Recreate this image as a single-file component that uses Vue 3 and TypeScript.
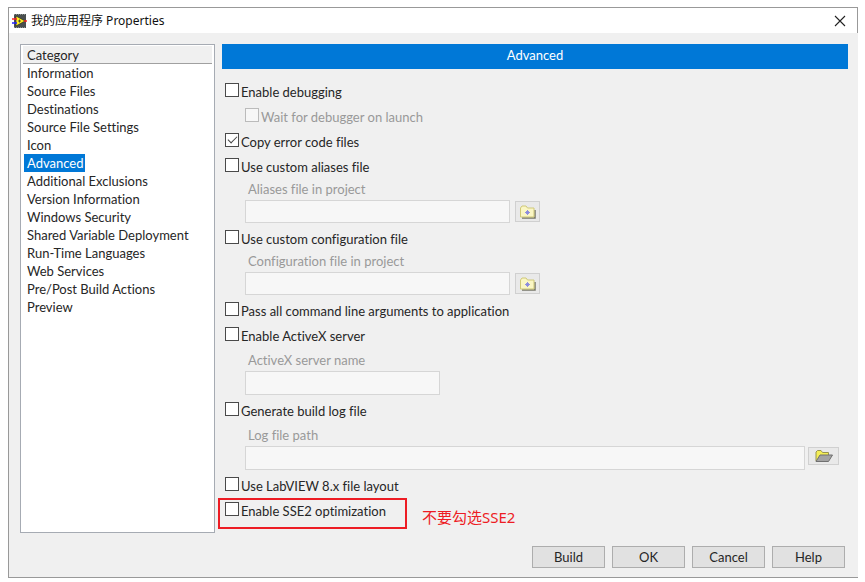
<script setup lang="ts">
import { ref, reactive } from 'vue'

const categories: string[] = [
  'Information',
  'Source Files',
  'Destinations',
  'Source File Settings',
  'Icon',
  'Advanced',
  'Additional Exclusions',
  'Version Information',
  'Windows Security',
  'Shared Variable Deployment',
  'Run-Time Languages',
  'Web Services',
  'Pre/Post Build Actions',
  'Preview',
]
const selected = ref('Advanced')
const actions: string[] = ['Build', 'OK', 'Cancel', 'Help']

const options = reactive({
  debugging: false,
  waitForDebugger: false,
  copyErrorFiles: true,
  customAliases: false,
  customConfig: false,
  passArguments: false,
  activeX: false,
  buildLog: false,
  legacyLayout: false,
  sse2: false,
})
</script>

<template>
  <div class="window">
    <header class="titlebar">
      <svg class="app-icon" viewBox="0 0 15 14" aria-hidden="true">
        <rect x="2" y="0" width="12" height="14" fill="#4a4f50" />
        <path d="M2 .5h12M2 13.500h12" stroke="#8d9490" stroke-dasharray="1 1" />
        <path d="M4 2L13 7L4 12Z" fill="#ffee22" stroke="#222" stroke-width=".6" />
        <path d="M0 5h5" stroke="#f22" stroke-width="1.500" />
        <path d="M0 9h5" stroke="#22f" stroke-width="1.500" />
        <path d="M12 7h3" stroke="#f22" stroke-width="1.500" />
        <path d="M6 7h3M7.500 5.500v3" stroke="#333" stroke-width=".8" />
      </svg>
      <span class="title">我的应用程序 Properties</span>
      <button class="close" type="button" aria-label="Close">
        <svg viewBox="0 0 10 10" aria-hidden="true">
          <path d="M0 0L10 10M10 0L0 10" stroke="#222" stroke-width="1.100" fill="none" />
        </svg>
      </button>
    </header>

    <div class="body">
      <nav class="categories">
        <h2 class="categories-head">Category</h2>
        <ul>
          <li v-for="name in categories" :key="name">
            <button
              type="button"
              :class="['category', { selected: name === selected }]"
              @click="selected = name"
            >{{ name }}</button>
          </li>
        </ul>
      </nav>

      <main class="page">
        <h1 class="banner">{{ selected }}</h1>
        <form class="options" @submit.prevent>
          <label class="check"><input v-model="options.debugging" type="checkbox" /><span>Enable debugging</span></label>
          <label class="check nested off"><input v-model="options.waitForDebugger" type="checkbox" disabled /><span>Wait for debugger on launch</span></label>
          <label class="check"><input v-model="options.copyErrorFiles" type="checkbox" /><span>Copy error code files</span></label>

          <label class="check"><input v-model="options.customAliases" type="checkbox" /><span>Use custom aliases file</span></label>
          <div class="field">
            <label for="aliases">Aliases file in project</label>
            <div class="entry">
              <input id="aliases" class="medium" type="text" disabled />
              <button class="browse" type="button" aria-label="Browse project for aliases file" disabled>
                <svg class="project-icon" viewBox="0 0 16 14" aria-hidden="true">
                  <path d="M2 13H15V5" fill="none" stroke="#77776a" stroke-width="1.500" />
                  <path d="M.500 12V3L2 1H6L7.500 3H14V12Z" fill="#faf6c4" stroke="#cfc878" />
                  <path d="M7.500 5v5M5 7.500h5M6 6l3 3M9 6l-3 3" stroke="#8585e0" stroke-width=".9" />
                </svg>
              </button>
            </div>
          </div>

          <label class="check"><input v-model="options.customConfig" type="checkbox" /><span>Use custom configuration file</span></label>
          <div class="field">
            <label for="config">Configuration file in project</label>
            <div class="entry">
              <input id="config" class="medium" type="text" disabled />
              <button class="browse" type="button" aria-label="Browse project for configuration file" disabled>
                <svg class="project-icon" viewBox="0 0 16 14" aria-hidden="true">
                  <path d="M2 13H15V5" fill="none" stroke="#77776a" stroke-width="1.500" />
                  <path d="M.500 12V3L2 1H6L7.500 3H14V12Z" fill="#faf6c4" stroke="#cfc878" />
                  <path d="M7.500 5v5M5 7.500h5M6 6l3 3M9 6l-3 3" stroke="#8585e0" stroke-width=".9" />
                </svg>
              </button>
            </div>
          </div>

          <label class="check"><input v-model="options.passArguments" type="checkbox" /><span>Pass all command line arguments to application</span></label>
          <label class="check"><input v-model="options.activeX" type="checkbox" /><span>Enable ActiveX server</span></label>
          <div class="field roomy">
            <label for="server">ActiveX server name</label>
            <div class="entry">
              <input id="server" class="short" type="text" disabled />
            </div>
          </div>

          <label class="check"><input v-model="options.buildLog" type="checkbox" /><span>Generate build log file</span></label>
          <div class="field roomy">
            <label for="log">Log file path</label>
            <div class="entry log">
              <input id="log" class="long" type="text" disabled />
              <button class="browse wide" type="button" aria-label="Browse for log file" disabled>
                <svg class="open-icon" viewBox="0 0 18 12" aria-hidden="true">
                  <path d="M1 11V2L2.500.500H6L7.500 2.500H13.500V5" fill="#f4ee55" stroke="#98944e" />
                  <path d="M1 11.500L5 5H17.500L13.500 11.500Z" fill="#a3a3a3" stroke="#707070" />
                </svg>
              </button>
            </div>
          </div>

          <label class="check"><input v-model="options.legacyLayout" type="checkbox" /><span>Use LabVIEW 8.x file layout</span></label>
          <div class="highlighted">
            <label class="check"><input v-model="options.sse2" type="checkbox" /><span>Enable SSE2 optimization</span></label>
            <div class="frame"></div>
            <p class="note">不要勾选SSE2</p>
          </div>
        </form>
      </main>
    </div>

    <footer class="actions">
      <button v-for="name in actions" :key="name" type="button">{{ name }}</button>
    </footer>
  </div>
</template>

<style>
body {
  background: #fff;
}
</style>

<style scoped>
.window {
  box-sizing: border-box;
  display: flex;
  flex-direction: column;
  min-height: calc(100vh - 11px);
  margin: 7px 7px 4px 8px;
  border: 1px solid #999;
  border-right: 0;
  background: #f0f0f0;
  color: #262626;
  font: 13px/18px Lato, "Noto Sans CJK SC", sans-serif;
  font-variant-ligatures: none;
}
button,
input {
  font: inherit;
  font-variant-ligatures: none;
  color: inherit;
}
h1,
h2,
p,
ul {
  margin: 0;
  padding: 0;
  font: inherit;
  font-variant-ligatures: none;
  list-style: none;
}
.titlebar {
  display: flex;
  align-items: center;
  height: 25px;
  padding: 0 12px 0 3px;
  border-right: 1px solid #999;
  background: #fff;
  font-size: 12px;
  font-family: "Noto Sans", "Noto Sans CJK SC", sans-serif;
}
.app-icon {
  width: 15px;
  height: 14px;
  margin-right: 4px;
}
.title {
  flex: 1;
  color: #111;
}
.close {
  display: flex;
  padding: 0;
  border: 0;
  background: none;
}
.close svg {
  width: 10px;
  height: 10px;
  overflow: visible;
}
.body {
  flex: 1;
  display: flex;
  gap: 7px;
  padding: 11px 10px 0 11px;
}
.categories {
  box-sizing: border-box;
  flex: 0 0 195px;
  padding: 1px 2px;
  border: 1px solid #a6abb3;
  background: #fff;
}
.categories-head {
  box-sizing: border-box;
  height: 18px;
  padding-left: 4px;
  border-bottom: 1px solid #a0a0a0;
  background: #f0f0f0;
}
.categories li {
  display: flex;
  height: 18px;
  padding-left: 1px;
}
.category {
  padding: 0 2px 0 3px;
  border: 0;
  background: none;
}
.category.selected {
  background: #0078d7;
  color: #fff;
}
.page {
  flex: 1;
  min-width: 0;
}
.banner {
  height: 25px;
  background: #0078d7;
  color: #fff;
  line-height: 23px;
  text-align: center;
}
.options {
  padding: 10px 9px 0 3px;
}
.check {
  display: flex;
  align-items: center;
  gap: 2px;
  width: fit-content;
  height: 25px;
}
.nested {
  margin-left: 20px;
}
.off {
  color: #999;
}
.check input {
  appearance: none;
  flex: none;
  box-sizing: border-box;
  width: 14px;
  height: 14px;
  margin: 0 0 3px;
  border: 1px solid #4a4a4a;
  background: #fff;
}
.check input:disabled {
  border-color: #bbb;
  background: #f7f7f7;
}
.check input:checked {
  display: grid;
  place-items: center;
}
.check input:checked::after {
  content: "";
  width: 8px;
  height: 4px;
  margin-bottom: 3px;
  border: solid #444;
  border-width: 0 0 1px 1px;
  transform: rotate(-45deg);
}
.field {
  margin: 0 0 3px 20px;
}
.field label {
  display: block;
  height: 21px;
  padding-left: 3px;
  color: #999;
  line-height: 20px;
}
.field.roomy label {
  height: 23px;
  line-height: 24px;
}
.entry {
  display: flex;
  align-items: center;
  gap: 5px;
}
.entry.log {
  align-items: flex-start;
  gap: 3px;
}
.entry input {
  box-sizing: border-box;
  min-width: 0;
  height: 23px;
  padding: 0 4px;
  border: 1px solid #d6d6d6;
  background: #f7f7f7;
}
.roomy .entry input {
  height: 24px;
}
.medium {
  width: 265px;
}
.short {
  width: 195px;
}
.long {
  flex: 1;
}
.browse {
  display: grid;
  place-items: center;
  box-sizing: border-box;
  width: 25px;
  height: 21px;
  padding: 0;
  border: 1px solid #d0d0d0;
  background: #e9e9e9;
}
.browse.wide {
  width: 31px;
  height: 18px;
  margin-top: 1px;
}
.project-icon {
  width: 16px;
  height: 14px;
}
.open-icon {
  width: 18px;
  height: 12px;
}
.highlighted {
  position: relative;
  display: flex;
  height: 31px;
}
.frame {
  position: absolute;
  top: 0;
  left: -7px;
  box-sizing: border-box;
  width: 189px;
  height: 31px;
  border: 2px solid #ed1c24;
  pointer-events: none;
}
.note {
  position: absolute;
  top: 9px;
  left: 197px;
  color: #ed1c24;
  font-family: "Noto Sans", "Noto Sans CJK SC", sans-serif;
  font-size: 15px;
  line-height: 20px;
}
.actions {
  display: flex;
  justify-content: flex-end;
  gap: 7px;
  padding: 13px 13px 9px;
}
.actions button {
  box-sizing: border-box;
  width: 73px;
  height: 22px;
  padding: 0;
  border: 1px solid #adadad;
  background: #e1e1e1;
  line-height: 20px;
}
</style>
